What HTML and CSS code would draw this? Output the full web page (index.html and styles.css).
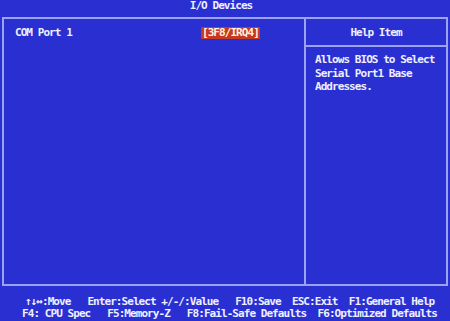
FILE: index.html
```html
<!DOCTYPE html>
<html>

<head>
  <title>I/O Devices</title>
  <link rel="stylesheet" href="styles.css">
</head>

<body>
  <div class="bios-title">I/O Devices</div>

  <div class="bios-frame">
    <div class="item-list">
      <div class="item-row">
        <span class="item-name">COM Port 1</span>
        <span class="item-value selected">[3F8/IRQ4]</span>
      </div>
    </div>
    <div class="help-panel">
      <div class="help-head">Help Item</div>
      <div class="help-text">Allows BIOS to Select Serial Port1 Base Addresses.</div>
    </div>
  </div>

  <div class="key-bar">
    <div class="key-line">↑↓↔:Move   Enter:Select +/-/:Value   F10:Save  ESC:Exit  F1:General Help</div>
    <div class="key-line">F4: CPU Spec   F5:Memory-Z   F8:Fail-Safe Defaults  F6:Optimized Defaults</div>
  </div>
</body>

</html>
```

FILE: styles.css
```css
html, body {
    margin: 0;
    padding: 0;
}
body {
    width: 450px;
    height: 321px;
    overflow: hidden;
    background-color: #2a2fd2;
    color: #eef0ff;
    font-family: "DejaVu Sans Mono", "Liberation Mono", monospace;
    font-weight: bold;
    font-size: 11px;
    letter-spacing: -0.94px;
    line-height: 12px;
}
.bios-title {
    height: 17px;
    text-align: center;
    padding-right: 8px;
    white-space: pre;
}
.bios-frame {
    box-sizing: border-box;
    height: 269px;
    margin: 0 2px;
    border: 2px solid #9aa2f2;
    display: grid;
    grid-template-columns: 302px 140px;
}
.item-list {
    border-right: 2px solid #9aa2f2;
    padding: 8px 0 0 11px;
}
.item-row {
    display: flex;
    height: 12px;
}
.item-name {
    width: 187px;
}
.item-value {
    white-space: pre;
}
.item-value.selected {
    background-color: #c8381e;
    color: #fff4e0;
    margin-left: -1px;
    padding: 0 1px;
}
.help-panel {
    display: flex;
    flex-direction: column;
}
.help-head {
    text-align: center;
    padding: 8px 0 6px;
    border-bottom: 2px solid #9aa2f2;
}
.help-text {
    padding: 6px 4px 0 9px;
    line-height: 13.5px;
}
.key-bar {
    margin-top: 10px;
    padding-left: 9px;
    text-align: center;
}
.key-line {
    white-space: pre;
}
```
